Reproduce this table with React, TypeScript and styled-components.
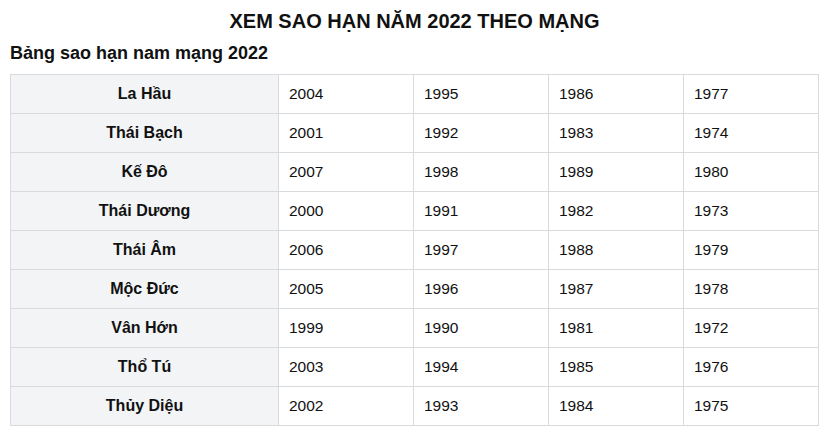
import styled, { createGlobalStyle } from "styled-components";

const rows: { name: string; years: string[] }[] = [
  { name: "La Hầu", years: ["2004", "1995", "1986", "1977"] },
  { name: "Thái Bạch", years: ["2001", "1992", "1983", "1974"] },
  { name: "Kế Đô", years: ["2007", "1998", "1989", "1980"] },
  { name: "Thái Dương", years: ["2000", "1991", "1982", "1973"] },
  { name: "Thái Âm", years: ["2006", "1997", "1988", "1979"] },
  { name: "Mộc Đức", years: ["2005", "1996", "1987", "1978"] },
  { name: "Vân Hớn", years: ["1999", "1990", "1981", "1972"] },
  { name: "Thổ Tú", years: ["2003", "1994", "1985", "1976"] },
  { name: "Thủy Diệu", years: ["2002", "1993", "1984", "1975"] },
];

export default () => {
  return (
    <Page>
      <GlobalStyle />
      <Title>XEM SAO HẠN NĂM 2022 THEO MẠNG</Title>
      <SubTitle>Bảng sao hạn nam mạng 2022</SubTitle>
      <Table>
        <colgroup>
          <col style={{ width: 268 }} />
          <col />
          <col />
          <col />
          <col />
        </colgroup>
        <tbody>
          {rows.map((r) => (
            <tr key={r.name}>
              <StarCell>{r.name}</StarCell>
              {r.years.map((y) => (
                <YearCell key={y}>{y}</YearCell>
              ))}
            </tr>
          ))}
        </tbody>
      </Table>
    </Page>
  );
};

const GlobalStyle = createGlobalStyle`
  body {
    margin: 0;
    background: #fff;
    font-family: "Liberation Sans", Arial, sans-serif;
    color: #111;
  }
`;

const Page = styled.div`
  padding: 8px 10px 0;
`;

const Title = styled.h1`
  margin: 0;
  text-align: center;
  font-size: 20px;
  font-weight: 700;
  line-height: 26px;
  color: #111;
`;

const SubTitle = styled.h2`
  margin: 8px 0 0;
  font-size: 18px;
  font-weight: 700;
  line-height: 22px;
  color: #111;
`;

const Table = styled.table`
  margin-top: 10px;
  width: 809px;
  border-collapse: collapse;
  table-layout: fixed;
`;

const Cell = styled.td`
  height: 38px;
  padding: 0 10px;
  border: 1px solid #d9dadd;
  font-size: 15.5px;
  line-height: 18px;
  vertical-align: middle;
  color: #111;
`;

const StarCell = styled(Cell)`
  background: #f3f4f6;
  font-size: 16px;
  font-weight: 700;
  text-align: center;
`;

const YearCell = styled(Cell)`
  text-align: left;
`;
